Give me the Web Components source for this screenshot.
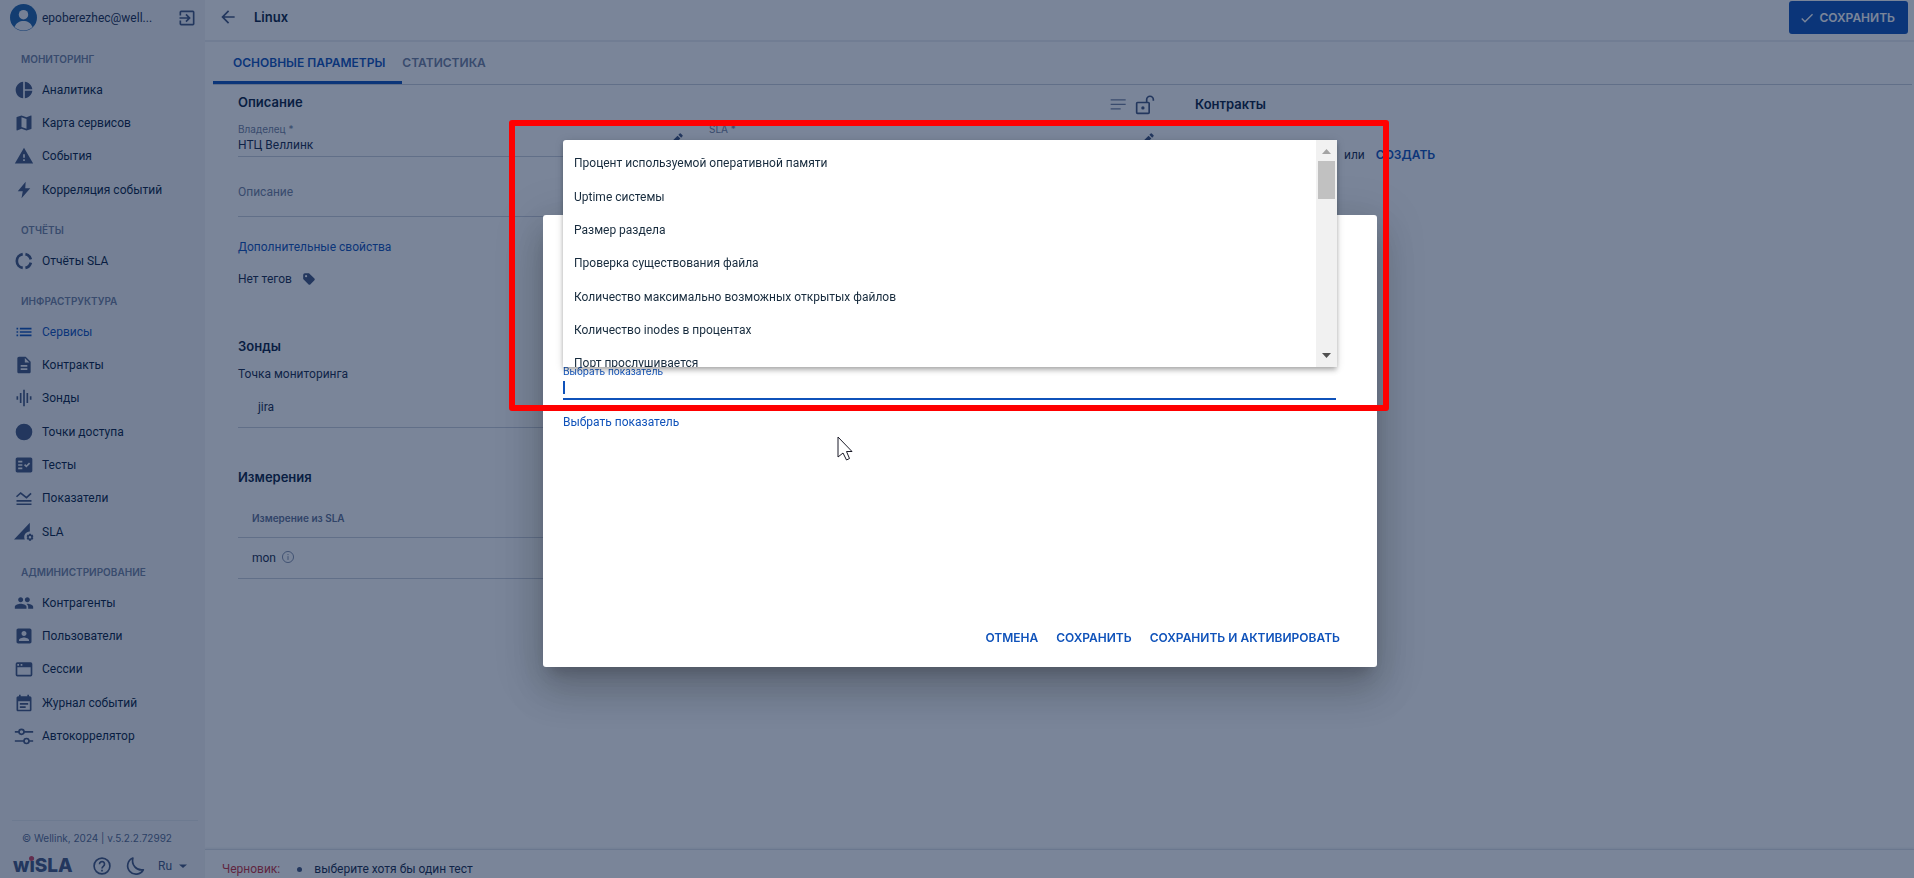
<!DOCTYPE html>
<html lang="ru">
<head>
<meta charset="utf-8">
<title>Linux</title>
<style>
  html, body { margin: 0; height: 100%; }
  body {
    --primary: #0f52ba;
    --ink: #172b4d;
    --strong: #091e42;
    --icon: #42567f;
    --muted: #7181a0;
    --line: #c9cfdb;
    --panel: #f4f5f7;
    --caps: Inter, "Noto Sans", sans-serif;
    font-family: Roboto, "Noto Sans", sans-serif;
    font-size: 12px;
    line-height: 16px;
    color: var(--ink);
    overflow: hidden;
  }
</style>
</head>
<body>
<app-shell>
  <side-nav slot="nav" user="epoberezhec@well..." copyright="© Wellink, 2024 | v.5.2.2.72992">
    <nav-section name="Мониторинг">
      <nav-item icon="pie">Аналитика</nav-item>
      <nav-item icon="map">Карта сервисов</nav-item>
      <nav-item icon="warning">События</nav-item>
      <nav-item icon="bolt">Корреляция событий</nav-item>
    </nav-section>
    <nav-section name="Отчёты">
      <nav-item icon="donut">Отчёты SLA</nav-item>
    </nav-section>
    <nav-section name="Инфраструктура">
      <nav-item icon="list" active>Сервисы</nav-item>
      <nav-item icon="doc">Контракты</nav-item>
      <nav-item icon="eq">Зонды</nav-item>
      <nav-item icon="dot">Точки доступа</nav-item>
      <nav-item icon="check">Тесты</nav-item>
      <nav-item icon="wave">Показатели</nav-item>
      <nav-item icon="sla">SLA</nav-item>
    </nav-section>
    <nav-section name="Администрирование">
      <nav-item icon="people">Контрагенты</nav-item>
      <nav-item icon="user">Пользователи</nav-item>
      <nav-item icon="window">Сессии</nav-item>
      <nav-item icon="journal">Журнал событий</nav-item>
      <nav-item icon="sliders">Автокоррелятор</nav-item>
    </nav-section>
  </side-nav>
  <page-header name="Linux"></page-header>
  <tab-bar></tab-bar>
  <service-form></service-form>
  <draft-bar></draft-bar>
</app-shell>
<indicator-dialog></indicator-dialog>

<script>
const ICONS = {
  pie: '<path d="M11 2v20c-5.07-.5-9-4.79-9-10s3.93-9.5 9-10zm2 0v9h9c-.5-4.7-4.3-8.5-9-9zm0 11v9c4.7-.5 8.5-4.3 9-9z"/>',
  map: '<path d="M20.5 3l-.16.03L15 5.1 9 3 3.36 4.9c-.21.07-.36.25-.36.48V20.5c0 .28.22.5.5.5l.16-.03L9 18.9l6 2.1 5.64-1.9c.21-.07.36-.25.36-.48V3.5c0-.28-.22-.5-.5-.5zM15 19l-6-2.11V5l6 2.11V19z"/>',
  warning: '<path d="M1 21h22L12 2 1 21zm12-3h-2v-2h2v2zm0-4h-2v-4h2v4z"/>',
  bolt: '<path d="M14 2 4.5 13.5h6L9 22 19.500 10h-6z"/>',
  donut: '<g fill="none" stroke="currentColor" stroke-width="3.200"><path d="M10.500 3.700a8.400 8.400 0 0 0 0 16.600M13.700 3.700a8.400 8.400 0 0 1 6.500 6.300M20.200 14a8.400 8.400 0 0 1-6.500 6.300"/></g>',
  list: '<path d="M3 13h2v-2H3v2zm0 4h2v-2H3v2zm0-8h2V7H3v2zm4 4h14v-2H7v2zm0 4h14v-2H7v2zM7 7v2h14V7H7z"/>',
  doc: '<path d="M14 2H6c-1.100 0-2 .900-2 2v16c0 1.100.900 2 2 2h12c1.100 0 2-.900 2-2V8l-6-6zm2 16H8v-2h8v2zm0-4H8v-2h8v2zm-3-5V3.500L18.500 9H13z"/>',
  eq: '<path d="M7 18h2V6H7v12zm4 4h2V2h-2v20zm-8-8h2v-4H3v4zm12 4h2V6h-2v12zm4-8v4h2v-4h-2z"/>',
  dot: '<circle cx="12" cy="12" r="10"/>',
  check: '<path d="M20 3H4c-1.100 0-2 .900-2 2v14c0 1.100.900 2 2 2h16c1.100 0 2-.900 2-2V5c0-1.100-.900-2-2-2zM10 17H5v-2h5v2zm0-4H5v-2h5v2zm0-4H5V7h5v2zm4.820 6L12 12.160l1.410-1.410 1.410 1.420L17.990 9l1.420 1.420L14.820 15z"/>',
  wave: '<path d="M3 14.500h18v2H3zM3 18.500h18v2H3z"/><path d="M3 10.500 8 6l7 5.500 5.500-5" fill="none" stroke="currentColor" stroke-width="2"/>',
  sla: '<path d="M0 21 19 1v10.500a6.500 6.500 0 0 0-6 9.500z"/><path fill-rule="evenodd" d="M18 14h2.400l.4 1.500 1.300-.4 1.200 2-1 1.100 1 1.100-1.200 2-1.300-.4-.4 1.500H18l-.4-1.500-1.300.4-1.200-2 1-1.100-1-1.100 1.200-2 1.300.4zm1.200 2.700a1.500 1.500 0 1 0 0 3 1.500 1.500 0 0 0 0-3z"/>',
  people: '<path d="M16 11c1.660 0 3-1.340 3-3s-1.340-3-3-3-3 1.340-3 3 1.340 3 3 3zm-8 0c1.660 0 3-1.340 3-3S9.660 5 8 5 5 6.340 5 8s1.340 3 3 3zm0 2c-2.330 0-7 1.170-7 3.500V19h14v-2.500C15 14.170 10.330 13 8 13zm8 0c-.290 0-.620.020-.970.050C16.190 13.890 17 15.020 17 16.500V19h6v-2.500c0-2.330-4.670-3.500-7-3.500z"/>',
  user: '<path d="M3 5v14c0 1.100.900 2 2 2h14c1.100 0 2-.900 2-2V5c0-1.100-.900-2-2-2H5c-1.100 0-2 .900-2 2zm12 4c0 1.660-1.340 3-3 3s-3-1.340-3-3 1.340-3 3-3 3 1.340 3 3zm-9 8c0-2 4-3.100 6-3.100s6 1.100 6 3.100v1H6v-1z"/>',
  window: '<path fill-rule="evenodd" d="M4 4h16a2 2 0 0 1 2 2v13a2 2 0 0 1-2 2H4a2 2 0 0 1-2-2V6a2 2 0 0 1 2-2zm0 6v9h16v-9zM4 6v2h2V6zm4 0v2h2V6z"/>',
  journal: '<path fill-rule="evenodd" d="M19 4h-1V2h-2v2H8V2H6v2H5c-1.100 0-2 .900-2 2v14c0 1.100.900 2 2 2h14c1.100 0 2-.900 2-2V6c0-1.100-.900-2-2-2zm0 16H5V10h14v10zM7 12h10v2H7zm0 4h7v2H7z"/>',
  sliders: '<g fill="none" stroke="currentColor" stroke-width="2"><path d="M1 7h5M12 7h11M1 18h11M18 18h5"/><circle cx="9" cy="7" r="3"/><circle cx="15" cy="18" r="3"/></g>',
  exit: '<path d="M10.090 15.590 11.500 17l5-5-5-5-1.410 1.410L12.670 11H3v2h9.670zM19 3H5a2 2 0 0 0-2 2v4h2V5h14v14H5v-4H3v4a2 2 0 0 0 2 2h14a2 2 0 0 0 2-2V5a2 2 0 0 0-2-2z"/>',
  back: '<path d="M20 11H7.830l5.590-5.590L12 4l-8 8 8 8 1.410-1.410L7.830 13H20v-2z"/>',
  tick: '<path d="M9 16.170 4.830 12l-1.420 1.410L9 19 21 7l-1.410-1.410z"/>',
  notes: '<path d="M2 5h18v1.500H2zM2 10.500h18V12H2zM2 16h12v1.500H2z"/>',
  unlock: '<g fill="none" stroke="currentColor" stroke-width="2"><rect x="2" y="9" width="15" height="13" rx="1"/><path d="M14 9V5.500a4 4 0 0 1 8 0V7"/></g><circle cx="9.500" cy="15.500" r="2"/>',
  pencil: '<path d="M3 17.250V21h3.750L17.810 9.940l-3.750-3.750zM20.710 7.040a1 1 0 0 0 0-1.410l-2.340-2.340a1 1 0 0 0-1.410 0l-1.830 1.830 3.750 3.750z"/>',
  tag: '<path fill-rule="evenodd" d="M2 5a3 3 0 0 1 3-3h7l9.300 9.300a2 2 0 0 1 0 2.900l-7.100 7.100a2 2 0 0 1-2.900 0L2 12zm5 .200a1.900 1.900 0 1 0 0 3.800 1.900 1.900 0 0 0 0-3.800z"/>',
  info: '<g fill="none" stroke="currentColor" stroke-width="1.500"><circle cx="12" cy="12" r="9.500"/><path d="M12 10.500v6.500M12 7v1.800"/></g>',
  help: '<g fill="none" stroke="currentColor" stroke-width="2"><circle cx="12" cy="12" r="9.500"/><path d="M9 9.800a3 3 0 1 1 4.800 2.300c-1.200.900-1.800 1.400-1.800 2.900M12 16.500v2"/></g>',
  moon: '<path fill="none" stroke="currentColor" stroke-width="2" stroke-linejoin="round" d="M9.500 2.500A10 10 0 1 0 22 16.500 11 11 0 0 1 9.500 2.500z"/>',
  caret: '<path d="M4 9h16l-8 7z"/>',
  avatar: '<circle cx="12" cy="12" r="12" fill="#1f62a8"/><circle cx="12" cy="9.500" r="4.200" fill="#f4f5f7"/><path fill="#f4f5f7" d="M4 20.500c1.500-4 4.500-5.500 8-5.500s6.500 1.500 8 5.500A11.500 11.500 0 0 1 12 23.500a11.500 11.500 0 0 1-8-3z"/>',
  cursor: '<path fill="#fff" stroke="#1b1b28" stroke-width="1" d="M1 1v20l5-4 3.500 7 3-1.500L9.500 15.500H15z"/>'
};

class AppIcon extends HTMLElement {
  connectedCallback() {
    this.attachShadow({ mode: "open" }).innerHTML = `
      <style>
        :host { display: inline-block; flex: none; width: 20px; height: 20px; }
        svg { display: block; width: 100%; height: 100%; fill: currentColor; overflow: visible; }
      </style>
      <svg viewBox="0 0 24 24" aria-hidden="true">${ICONS[this.getAttribute("name")]}</svg>`;
  }
}

class AppShell extends HTMLElement {
  connectedCallback() {
    this.attachShadow({ mode: "open" }).innerHTML = `
      <style>
        :host { display: flex; height: 100vh; background: #fff; }
        main { flex: 1; min-width: 0; display: flex; flex-direction: column; }
      </style>
      <slot name="nav"></slot>
      <main><slot></slot></main>`;
  }
}

class SideNav extends HTMLElement {
  connectedCallback() {
    this.attachShadow({ mode: "open" }).innerHTML = `
      <style>
        :host { display: flex; flex-direction: column; flex: none; width: 205px; background: var(--panel); }
        button { border: 0; padding: 0; background: none; font: inherit; color: inherit; display: flex; align-items: center; }
        .user { display: flex; align-items: center; height: 35px; padding: 0 8px 0 10px; gap: 5px; }
        .user span { flex: 1; }
        .user app-icon[name=avatar] { width: 27px; height: 27px; }
        .user button { color: var(--icon); }
        nav { flex: 1; display: flex; flex-direction: column; gap: 11px; padding-top: 11px; }
        footer { margin: 0 7px 0 12px; border-top: 1px solid #e3e6ec; }
        p { margin: 0; padding: 9px 10px; font: 10px/16px var(--caps); color: #566a8e; }
        .tools { display: flex; align-items: center; height: 22px; padding: 0 0 1px 1px; color: var(--icon); }
        .logo { position: relative; font: 800 19px/22px var(--caps); width: 79px; }
        .logo i { position: absolute; left: 16px; top: 1px; width: 5px; height: 5px; border-radius: 50%; background: #d0405a; }
        .tools button + button { margin-left: 13px; }
        .tools app-icon[name=caret] { width: 12px; height: 12px; margin-left: 5px; }
      </style>
      <div class="user">
        <app-icon name="avatar"></app-icon>
        <span>${this.getAttribute("user")}</span>
        <button aria-label="Выйти"><app-icon name="exit"></app-icon></button>
      </div>
      <nav><slot></slot></nav>
      <footer>
        <p>${this.getAttribute("copyright")}</p>
        <div class="tools">
          <div class="logo">wiSLA<i></i></div>
          <button aria-label="Помощь"><app-icon name="help"></app-icon></button>
          <button aria-label="Тема"><app-icon name="moon"></app-icon></button>
          <button>Ru<app-icon name="caret"></app-icon></button>
        </div>
      </footer>`;
  }
}

class NavSection extends HTMLElement {
  connectedCallback() {
    this.attachShadow({ mode: "open" }).innerHTML = `
      <style>
        :host { display: block; }
        h2 { margin: 0; padding-left: 21px; font: 600 10px/27px var(--caps); color: var(--muted); text-transform: uppercase; }
        ::slotted(nav-item:nth-child(3n)) { padding-bottom: 1px; }
      </style>
      <h2>${this.getAttribute("name")}</h2>
      <slot></slot>`;
  }
}

class NavItem extends HTMLElement {
  connectedCallback() {
    this.attachShadow({ mode: "open" }).innerHTML = `
      <style>
        :host { display: block; }
        a { display: flex; align-items: center; gap: 8px; height: 33px; padding-left: 14px; color: var(--strong); text-decoration: none; }
        app-icon { color: var(--icon); }
        :host([active]) a, :host([active]) app-icon { color: var(--primary); }
      </style>
      <a href="#"><app-icon name="${this.getAttribute("icon")}"></app-icon><slot></slot></a>`;
  }
}

class PageHeader extends HTMLElement {
  connectedCallback() {
    this.attachShadow({ mode: "open" }).innerHTML = `
      <style>
        :host { display: flex; align-items: flex-start; box-sizing: border-box; height: 42px; padding: 0 6px 0 13px; border-bottom: 2px solid #ebedf1; }
        a { color: var(--icon); margin: 7px 16px 0 0; height: 20px; }
        h1 { flex: 1; margin: 0; font: 600 13px/35px var(--caps); color: var(--strong); }
        button { display: flex; align-items: center; gap: 4px; height: 33px; margin-top: 1px; padding: 0 13px 0 10px; border: 0; border-radius: 3px; background: var(--primary); color: #fff; font: 600 12px/16px var(--caps); text-transform: uppercase; }
        button app-icon { width: 16px; height: 16px; }
      </style>
      <a href="#" aria-label="Назад"><app-icon name="back"></app-icon></a>
      <h1>${this.getAttribute("name")}</h1>
      <button><app-icon name="tick"></app-icon>Сохранить</button>`;
  }
}

class TabBar extends HTMLElement {
  connectedCallback() {
    this.attachShadow({ mode: "open" }).innerHTML = `
      <style>
        :host { display: flex; margin: 0 2px 0 8px; border-bottom: 1px solid var(--line); }
        button { height: 42px; padding: 2px 17px 0 20px; border: 0; border-bottom: 3px solid transparent; background: none; font: 600 12px/16px var(--caps); text-transform: uppercase; color: var(--muted); }
        button[aria-selected=true] { color: var(--primary); border-color: var(--primary); }
        button + button { padding: 2px 0 0; }
      </style>
      <button role="tab" aria-selected="true">Основные параметры</button>
      <button role="tab" aria-selected="false">Статистика</button>`;
  }
}

class FormField extends HTMLElement {
  connectedCallback() {
    const edit = this.hasAttribute("editable");
    this.attachShadow({ mode: "open" }).innerHTML = `
      <style>
        :host { display: block; position: relative; border-bottom: 1px solid var(--line); }
        label { display: block; height: 14px; font: 10px/14px var(--caps); color: var(--muted); }
        input { display: block; box-sizing: border-box; width: 100%; height: 20px; padding: 0 0 3px; border: 0; outline: 0; background: none; font: inherit; color: inherit; }
        :host([hint]) input { height: 34px; padding-bottom: 14px; }
        input::placeholder { color: var(--muted); opacity: 1; }
        app-icon { position: absolute; right: 0; top: 9px; width: 18px; height: 18px; color: var(--icon); }
      </style>
      ${this.hasAttribute("label") ? `<label for="field">${this.getAttribute("label")}</label>` : ""}
      <input id="field" value="${this.getAttribute("value") || ""}" placeholder="${this.getAttribute("hint") || ""}">
      ${edit ? `<app-icon name="pencil"></app-icon>` : ""}`;
  }
}

class ServiceForm extends HTMLElement {
  connectedCallback() {
    this.attachShadow({ mode: "open" }).innerHTML = `
      <style>
        :host { flex: 1; min-height: 0; display: grid; grid-template-columns: 918fr 719fr; column-gap: 39px; padding-left: 33px; }
        h2 { margin: 0; font: 600 13px/18px var(--caps); color: var(--strong); }
        a { color: var(--primary); text-decoration: none; }
        .head { display: flex; justify-content: space-between; padding-top: 8px; height: 21px; }
        .head div { display: flex; gap: 6px; padding: 2px 1px 0 0; color: var(--icon); }
        .head app-icon:first-child { color: var(--muted); }
        .pair { display: grid; grid-template-columns: 1fr 1fr; gap: 24px; margin-top: 8px; }
        .description { margin-top: 25px; }
        .more { display: block; margin-top: 22px; }
        .tags { display: flex; align-items: center; gap: 10px; margin: 16px 0 50px; }
        .tags app-icon { width: 14px; height: 14px; color: var(--icon); }
        .probe { margin: 0; padding: 11px 0 8px; }
        .jira { margin: 0 0 40px; padding: 9px 20px 12px; border-bottom: 1px solid var(--line); }
        table { width: 100%; margin-top: 14px; border-collapse: collapse; text-align: left; }
        th, td { padding: 0 14px; border-bottom: 1px solid var(--line); }
        th { height: 35px; padding-bottom: 2px; font: 600 10px/16px var(--caps); color: #5f7195; }
        td { height: 40px; }
        td span { display: flex; gap: 5px; }
        td app-icon { width: 14px; height: 14px; color: var(--muted); }
        .contracts h2 { padding-top: 10px; }
        .contracts p { margin: 34px 0 0 149px; display: flex; gap: 11px; }
        .contracts a { font: 600 12px/16px var(--caps); text-transform: uppercase; }
      </style>
      <section>
        <div class="head"><h2>Описание</h2><div><app-icon name="notes"></app-icon><app-icon name="unlock"></app-icon></div></div>
        <div class="pair">
          <form-field label="Владелец *" value="НТЦ Веллинк" editable></form-field>
          <form-field label="SLA *" editable></form-field>
        </div>
        <form-field class="description" hint="Описание"></form-field>
        <a class="more" href="#">Дополнительные свойства</a>
        <div class="tags">Нет тегов <app-icon name="tag"></app-icon></div>
        <h2>Зонды</h2>
        <p class="probe">Точка мониторинга</p>
        <p class="jira">jira</p>
        <h2>Измерения</h2>
        <table>
          <tr><th>Измерение из SLA</th></tr>
          <tr><td><span>mon <app-icon name="info"></app-icon></span></td></tr>
        </table>
      </section>
      <section class="contracts">
        <h2>Контракты</h2>
        <p>или <a href="#">Создать</a></p>
      </section>`;
  }
}

class DraftBar extends HTMLElement {
  connectedCallback() {
    this.attachShadow({ mode: "open" }).innerHTML = `
      <style>
        :host { display: flex; align-items: center; gap: 17px; height: 18px; padding: 10px 17px 0; border-top: 1px solid #dde1e8; box-shadow: 0 -1px 2px #eceef2; }
        b { font-weight: 400; color: #c8303c; }
        ul { margin: 0; padding: 0; list-style: none; }
        li { display: flex; align-items: center; gap: 12px; }
        li::before { content: ""; width: 5px; height: 5px; border-radius: 50%; background: var(--icon); }
      </style>
      <b>Черновик:</b>
      <ul><li>выберите хотя бы один тест</li></ul>`;
  }
}

class OptionList extends HTMLElement {
  connectedCallback() {
    this.attachShadow({ mode: "open" }).innerHTML = `
      <style>
        :host { display: flex; height: 227px; border-radius: 3px 0 0 0; background: #fff; color: #172b3d; box-shadow: 0 2px 4px -1px rgba(0,0,0,.2), 0 4px 5px rgba(0,0,0,.14), 0 1px 10px rgba(0,0,0,.12); }
        ul { flex: 1; margin: 0; padding: 7px 0 0; list-style: none; overflow: hidden; }
        ::slotted(li) { padding-left: 11px; line-height: 33px; }
        ::slotted(li:nth-child(3n+1)) { padding-bottom: 1px; }
        .bar { display: flex; flex-direction: column; align-items: center; width: 21px; background: #f1f1f1; }
        .thumb { width: 17px; height: 38px; background: #c1c1c1; }
        svg { display: block; width: 21px; height: 21px; fill: #a3a3a3; }
        svg:last-child { margin-top: auto; fill: #505050; }
      </style>
      <ul role="listbox"><slot></slot></ul>
      <div class="bar">
        <svg viewBox="0 0 21 21"><path d="M6 14h9l-4.500-5z"/></svg>
        <div class="thumb"></div>
        <svg viewBox="0 0 21 21"><path d="M6 7h9l-4.500 5z"/></svg>
      </div>`;
  }
}

class IndicatorDialog extends HTMLElement {
  connectedCallback() {
    this.attachShadow({ mode: "open" }).innerHTML = `
      <style>
        :host { position: fixed; inset: 0; display: grid; place-items: center; padding: 4px 0 0 6px; background: rgba(9,30,66,.54); }
        .dialog { position: relative; display: flex; flex-direction: column; box-sizing: border-box; width: 834px; height: 452px; padding: 148px 20px 21px; border-radius: 3px; background: #fff; box-shadow: 0 11px 15px -7px rgba(0,0,0,.2), 0 24px 38px 3px rgba(0,0,0,.14), 0 9px 46px 8px rgba(0,0,0,.12); }
        .field { position: relative; margin-right: 21px; color: var(--primary); }
        label { display: block; font: 10px/16px var(--caps); }
        input { display: block; box-sizing: border-box; width: 100%; height: 21px; padding: 0; border: 0; border-bottom: 2px solid var(--primary); outline: 0; font: inherit; background: linear-gradient(var(--primary), var(--primary)) 0 2px / 2px 13px no-repeat; }
        .hint { margin: 14px 0 0; }
        option-list { position: absolute; left: 0; right: -1px; bottom: 63px; }
        .frame { position: absolute; left: -34px; right: -12px; top: -95px; height: 279px; border: 6px solid #f00; border-radius: 3px; }
        .pointer { position: absolute; left: 294px; top: 221px; width: 24px; height: 24px; }
        .actions { display: flex; justify-content: flex-end; gap: 18px; margin: auto 17px 0 0; }
        button { padding: 0; border: 0; background: none; color: var(--primary); font: 600 12px/16px var(--caps); text-transform: uppercase; }
      </style>
      <div class="dialog" role="dialog">
        <div class="field">
          <label for="indicator">Выбрать показатель</label>
          <input id="indicator">
          <p class="hint">Выбрать показатель</p>
          <option-list>
            <li role="option">Процент используемой оперативной памяти</li>
            <li role="option">Uptime системы</li>
            <li role="option">Размер раздела</li>
            <li role="option">Проверка существования файла</li>
            <li role="option">Количество максимально возможных открытых файлов</li>
            <li role="option">Количество inodes в процентах</li>
            <li role="option">Порт прослушивается</li>
          </option-list>
        </div>
        <div class="actions">
          <button>Отмена</button>
          <button>Сохранить</button>
          <button>Сохранить и активировать</button>
        </div>
        <div class="frame"></div>
        <app-icon class="pointer" name="cursor"></app-icon>
      </div>`;
  }
}

customElements.define("app-icon", AppIcon);
customElements.define("app-shell", AppShell);
customElements.define("side-nav", SideNav);
customElements.define("nav-section", NavSection);
customElements.define("nav-item", NavItem);
customElements.define("page-header", PageHeader);
customElements.define("tab-bar", TabBar);
customElements.define("form-field", FormField);
customElements.define("service-form", ServiceForm);
customElements.define("draft-bar", DraftBar);
customElements.define("option-list", OptionList);
customElements.define("indicator-dialog", IndicatorDialog);
</script>
</body>
</html>
